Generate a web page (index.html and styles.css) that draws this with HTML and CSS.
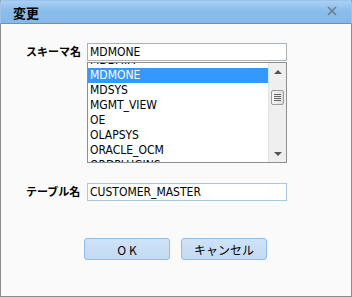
FILE: index.html
```html
<!DOCTYPE html>
<html lang="ja">
<head>
    <meta charset="UTF-8">
    <title>変更</title>
    <link rel="stylesheet" href="styles.css">
</head>
<body>
    <div class="dialog">
        <div class="titlebar">
            <span class="title">変更</span>
            <svg class="close" width="10" height="10" viewBox="0 0 10 10">
                <path d="M1 1 L9 9 M9 1 L1 9" stroke="#6f7d8a" stroke-width="1.6"/>
            </svg>
        </div>

        <div class="content">
            <div class="row">
                <label class="label" for="schema">スキーマ名</label>
                <div class="field">
                    <input type="text" id="schema" class="text" value="MDMONE">
                    <div class="listbox">
                        <ul class="items">
                            <li>MDDATA</li>
                            <li class="selected">MDMONE</li>
                            <li>MDSYS</li>
                            <li>MGMT_VIEW</li>
                            <li>OE</li>
                            <li>OLAPSYS</li>
                            <li>ORACLE_OCM</li>
                            <li>ORDPLUGINS</li>
                        </ul>
                        <div class="scrollbar">
                            <span class="arrow up"></span>
                            <span class="thumb"><i></i><i></i><i></i><i></i></span>
                            <span class="arrow down"></span>
                        </div>
                    </div>
                </div>
            </div>

            <div class="row table-row">
                <label class="label" for="table">テーブル名</label>
                <div class="field">
                    <input type="text" id="table" class="text focused" value="CUSTOMER_MASTER">
                </div>
            </div>

            <div class="buttons">
                <button type="button">O K</button>
                <button type="button">キャンセル</button>
            </div>
        </div>
    </div>
</body>
</html>
```

FILE: styles.css
```css
/* General */
body {
    margin: 0;
    background-color: #fafafa;
    font-family: "DejaVu Sans Condensed", "Liberation Sans", "Noto Sans CJK JP", sans-serif;
    color: #000;
}

.dialog {
    width: 352px;
    height: 297px;
    box-sizing: border-box;
    border: 1px solid #8a8a8a;
    border-top: none;
    display: flex;
    flex-direction: column;
    background-color: #fafafa;
}

/* Barra de titulo */
.titlebar {
    height: 23px;
    margin: 0 -1px;
    border: 1px solid #9cc4ea;
    border-bottom: 1px solid #8a8a8a;
    border-radius: 3px 3px 0 0;
    background: linear-gradient(#a9d0f3, #89bdeb 45%, #84b9ea);
    display: flex;
    align-items: center;
    justify-content: space-between;
    padding: 0 14px 0 12px;
    box-sizing: content-box;
    height: 22px;
}

.title {
    font-family: "Noto Sans CJK JP", sans-serif;
    font-weight: bold;
    font-size: 13px;
    margin-top: 1px;
}

.close {
    margin-top: -3px;
}

/* Contenido */
.content {
    padding: 19px 0 0 25px;
}

.row {
    display: flex;
    align-items: flex-start;
}

.label {
    font-family: "Noto Sans CJK JP", sans-serif;
    font-weight: bold;
    font-size: 11px;
    width: 61px;
    line-height: 18px;
    margin-top: -1px;
}

.field {
    width: 200px;
}

.text {
    display: block;
    width: 200px;
    height: 18px;
    box-sizing: border-box;
    border: 1px solid #adb2b8;
    background: #fff;
    padding: 0 0 0 2px;
    margin: 0;
    font-family: "DejaVu Sans Condensed", "Liberation Sans", sans-serif;
    font-size: 12px;
    outline: none;
}

.text.focused {
    border-color: #a9c6e4;
}

/* Lista */
.listbox {
    margin-top: 1px;
    height: 101px;
    box-sizing: border-box;
    border: 1px solid #8e8e8e;
    background: #fff;
    display: flex;
    overflow: hidden;
}

.items {
    list-style: none;
    margin: -10px 0 0 0;
    padding: 0;
    flex: 1;
    font-size: 12px;
}

.items li {
    height: 15px;
    line-height: 15px;
    padding-left: 2px;
}

.items li.selected {
    background-color: #3399ff;
    color: #fff;
}

.scrollbar {
    width: 17px;
    border-left: 1px solid #e2e2e2;
    background: #efefef;
    display: flex;
    flex-direction: column;
    align-items: center;
    position: relative;
}

.arrow {
    width: 0;
    height: 0;
    border-left: 4px solid transparent;
    border-right: 4px solid transparent;
}

.arrow.up {
    border-bottom: 4px solid #555;
    margin-top: 7px;
}

.arrow.down {
    border-top: 4px solid #555;
    margin-top: auto;
    margin-bottom: 6px;
}

.thumb {
    margin-top: 16px;
    width: 13px;
    height: 15px;
    box-sizing: border-box;
    border: 1px solid #9a9a9a;
    border-radius: 2px;
    background: linear-gradient(90deg, #f6f6f6, #dedede);
    display: flex;
    flex-direction: column;
    justify-content: center;
    align-items: center;
    gap: 1px;
}

.thumb i {
    display: block;
    width: 7px;
    height: 1px;
    background: #666;
}

.table-row {
    margin-top: 20px;
}

/* Botones */
.buttons {
    display: flex;
    gap: 11px;
    margin: 37px 0 0 58px;
}

.buttons button {
    width: 86px;
    height: 22px;
    border: 1px solid #8dbdec;
    border-radius: 3px;
    background: linear-gradient(#cfe3f7, #c2daf2);
    font-family: "Noto Sans CJK JP", sans-serif;
    font-size: 12px;
    color: #000;
    padding: 0;
}
```
